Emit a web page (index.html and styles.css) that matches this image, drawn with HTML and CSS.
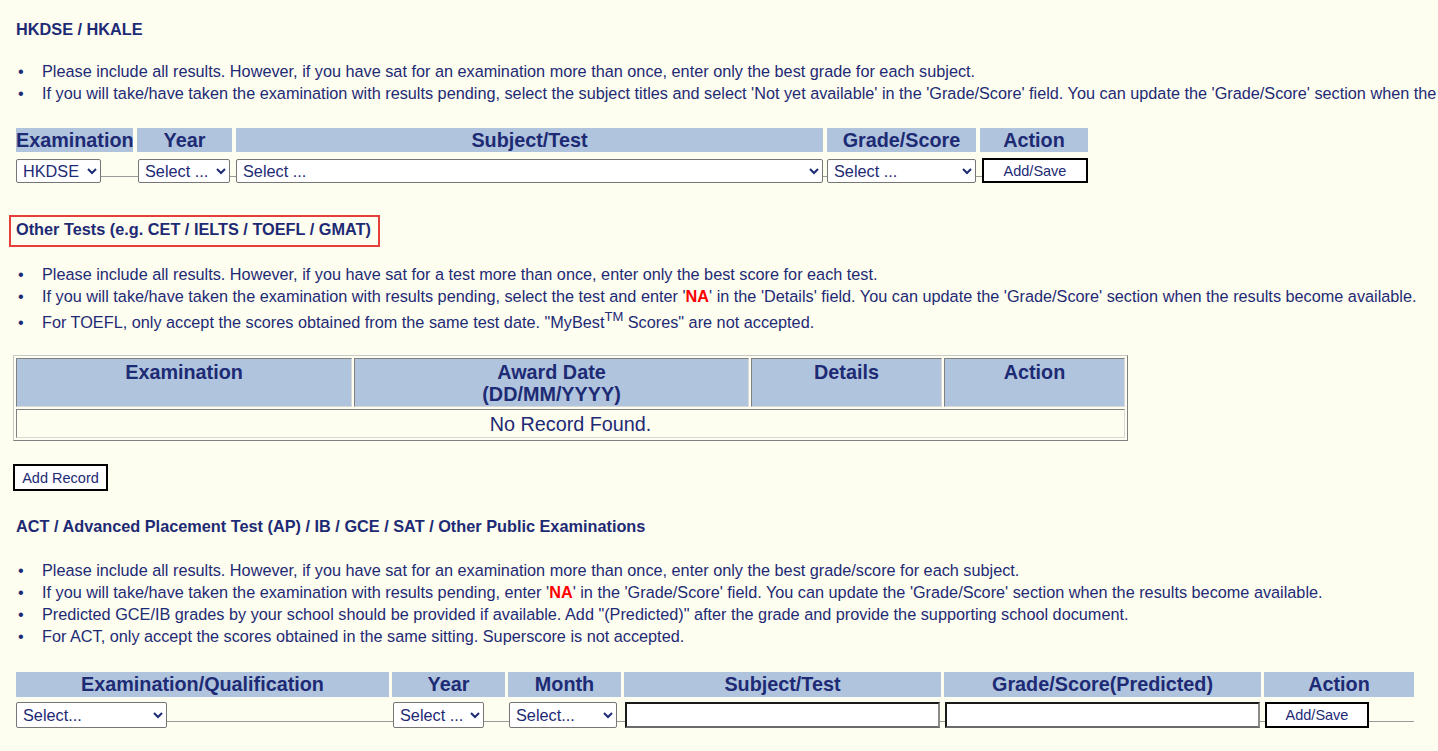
FILE: index.html
```html
<!DOCTYPE html>
<html>
<head>
<meta charset="utf-8">
<title>Examination Results</title>
<link rel="stylesheet" href="styles.css">
</head>
<body>
<div class="page">
  <h2 class="sec sec-first">HKDSE / HKALE</h2>
  <ul class="notes notes-1">
    <li>Please include all results. However, if you have sat for an examination more than once, enter only the best grade for each subject.</li>
    <li>If you will take/have taken the examination with results pending, select the subject titles and select 'Not yet available' in the 'Grade/Score' field. You can update the 'Grade/Score' section when the results become available.</li>
  </ul>

  <div class="grid grid-1 ghead">
    <div class="th">Examination</div>
    <div class="th">Year</div>
    <div class="th">Subject/Test</div>
    <div class="th">Grade/Score</div>
    <div class="th">Action</div>
  </div>
  <div class="grid grid-1 gbody gbody-1">
    <div class="td"><select class="sel sel-hkdse"><option>HKDSE</option></select></div>
    <div class="td"><select class="sel sel-year1"><option>Select ...</option></select></div>
    <div class="td"><select class="sel sel-subj1"><option>Select ...</option></select></div>
    <div class="td"><select class="sel sel-grade1"><option>Select ...</option></select></div>
    <div class="td"><button class="btn btn-save1">Add/Save</button></div>
  </div>

  <div class="boxed"><h2 class="sec">Other Tests (e.g. CET / IELTS / TOEFL / GMAT)</h2></div>
  <ul class="notes notes-2">
    <li>Please include all results. However, if you have sat for a test more than once, enter only the best score for each test.</li>
    <li>If you will take/have taken the examination with results pending, select the test and enter '<b class="na">NA</b>' in the 'Details' field. You can update the 'Grade/Score' section when the results become available.</li>
    <li>For TOEFL, only accept the scores obtained from the same test date. "MyBest<sup>TM</sup> Scores" are not accepted.</li>
  </ul>

  <table class="rec">
    <colgroup>
      <col class="c1"><col class="c2"><col class="c3"><col class="c4">
    </colgroup>
    <thead>
      <tr>
        <th>Examination</th>
        <th>Award Date<br>(DD/MM/YYYY)</th>
        <th>Details</th>
        <th>Action</th>
      </tr>
    </thead>
    <tbody>
      <tr><td colspan="4">No Record Found.</td></tr>
    </tbody>
  </table>

  <button class="btn btn-add">Add Record</button>

  <h2 class="sec sec-third">ACT / Advanced Placement Test (AP) / IB / GCE / SAT / Other Public Examinations</h2>
  <ul class="notes notes-3">
    <li>Please include all results. However, if you have sat for an examination more than once, enter only the best grade/score for each subject.</li>
    <li>If you will take/have taken the examination with results pending, enter '<b class="na">NA</b>' in the 'Grade/Score' field. You can update the 'Grade/Score' section when the results become available.</li>
    <li>Predicted GCE/IB grades by your school should be provided if available. Add "(Predicted)" after the grade and provide the supporting school document.</li>
    <li>For ACT, only accept the scores obtained in the same sitting. Superscore is not accepted.</li>
  </ul>

  <div class="grid grid-3 ghead ghead-3">
    <div class="th">Examination/Qualification</div>
    <div class="th">Year</div>
    <div class="th">Month</div>
    <div class="th">Subject/Test</div>
    <div class="th">Grade/Score(Predicted)</div>
    <div class="th">Action</div>
  </div>
  <div class="grid grid-3 gbody gbody-3">
    <div class="td"><select class="sel sel3 sel-exam3"><option>Select...</option></select></div>
    <div class="td"><select class="sel sel3 sel-year3"><option>Select ...</option></select></div>
    <div class="td"><select class="sel sel3 sel-month3"><option>Select...</option></select></div>
    <div class="td"><input class="txt txt-subj" type="text"></div>
    <div class="td"><input class="txt txt-grade" type="text"></div>
    <div class="td"><button class="btn btn-save3">Add/Save</button></div>
  </div>
</div>
</body>
</html>
```

FILE: styles.css
```css
html, body {
  margin: 0;
  padding: 0;
  background: #fdfdf0;
  overflow: hidden;
}

body {
  width: 1438px;
  height: 751px;
  font-family: "Liberation Sans", Arial, sans-serif;
  color: #1d2a74;
}

.page {
  padding: 19px 0 0 16px;
}

.sec {
  margin: 0;
  font-size: 16.3px;
  font-weight: bold;
  line-height: 20px;
  white-space: nowrap;
}

.notes {
  list-style: none;
  margin: 0;
  padding: 0;
  font-size: 16.25px;
  line-height: 22px;
  white-space: nowrap;
}

.notes li {
  padding-left: 26px;
}

.notes li::before {
  content: "\2022";
  display: inline-block;
  width: 26px;
  margin-left: -26px;
  box-sizing: border-box;
  padding-left: 2px;
}

.notes-1 { margin-top: 21px; }
.notes-2 { margin-top: 16px; }
.notes-3 { margin-top: 23px; }

.na {
  color: #ff0000;
  font-weight: bold;
}

sup {
  font-size: 13px;
  vertical-align: 7px;
  line-height: 20px;
}

/* grid tables */
.grid {
  display: grid;
}

.grid-1 {
  grid-template-columns: 117px 95px 587px 149px 108px;
  column-gap: 4px;
  width: 1072px;
}

.grid-3 {
  grid-template-columns: 373px 113px 113px 317px 317px 150px;
  column-gap: 3px;
  width: 1398px;
}

.ghead {
  margin-top: 24px;
}

.ghead-3 {
  margin-top: 25px;
}

.th {
  background: #b0c4de;
  font-size: 19.8px;
  font-weight: bold;
  text-align: center;
  height: 24px;
  line-height: 24px;
  white-space: nowrap;
}

.ghead-3 .th {
  height: 25px;
  line-height: 25px;
}

.gbody {
  margin-top: 6px;
  height: 25px;
  background: linear-gradient(#9a9a9a, #9a9a9a) no-repeat 0 18px / 100% 1px;
}

.gbody-3 {
  margin-top: 5px;
  height: 26px;
  background-position: 0 19px;
}

.td {
  display: flex;
  align-items: flex-start;
  min-width: 0;
}

.sel {
  font-family: "Liberation Sans", Arial, sans-serif;
  font-size: 16.25px;
  color: #1d2a74;
  height: 24px;
  margin: 1px 0 0 0;
  padding: 0 2px;
  background: #fff;
  border: 1px solid #767676;
  border-radius: 2px;
}

.sel-hkdse { width: 85px; }
.sel-year1 { width: 92px; margin-left: 1px; }
.sel-subj1 { width: 587px; }
.sel-grade1 { width: 149px; }

.sel3 {
  height: 26px;
  margin-top: 0;
}

.sel-exam3 { width: 151px; }
.sel-year3 { width: 91px; margin-left: 1px; }
.sel-month3 { width: 108px; margin-left: 1px; }

.txt {
  box-sizing: border-box;
  height: 26px;
  margin: 0 0 0 1px;
  padding: 0 3px;
  background: #fff;
  border-style: solid;
  border-width: 2px;
  border-color: #1a1a1a #8a8a8a #6a6a6a #1a1a1a;
  font-family: "Liberation Sans", Arial, sans-serif;
  font-size: 16px;
}

.txt-subj { width: 315px; }
.txt-grade { width: 315px; }

.btn {
  box-sizing: border-box;
  background: #fff;
  border: 2px solid #000;
  border-radius: 0;
  padding: 0;
  font-family: "Liberation Sans", Arial, sans-serif;
  font-size: 14.5px;
  color: #1d2a74;
}

.btn-save1 {
  width: 106px;
  height: 25px;
  margin-left: 2px;
}

.btn-save3 {
  width: 104px;
  height: 26px;
  margin-left: 1px;
}

.btn-add {
  display: block;
  width: 95px;
  height: 27px;
  margin: 23px 0 0 -3px;
}

/* red box heading */
.boxed {
  display: inline-block;
  margin: 32px 0 0 -7px;
  padding: 2px 7px 6px 5px;
  border: 2px solid #e53e3b;
}

/* record table */
.rec {
  margin: 22px 0 0 -3px;
  width: 1113px;
  table-layout: fixed;
  border-collapse: separate;
  border-spacing: 2px;
  border: 1px solid;
  border-color: #c8c8c8 #808080 #808080 #c8c8c8;
}

.rec .c1 { width: 336px; }
.rec .c2 { width: 395px; }
.rec .c3 { width: 191px; }
.rec .c4 { width: 181px; }

.rec th,
.rec td {
  border: 1px solid;
  border-color: #808080 #d8d8d8 #d8d8d8 #808080;
  font-size: 19.8px;
  text-align: center;
}

.rec th {
  background: #b0c4de;
  font-weight: bold;
  vertical-align: top;
  line-height: 22px;
  padding: 2px 0 1px;
}

.rec td {
  line-height: 22px;
  padding: 3px 0 2px;
}

.sec-third {
  margin-top: 25px;
}
```
